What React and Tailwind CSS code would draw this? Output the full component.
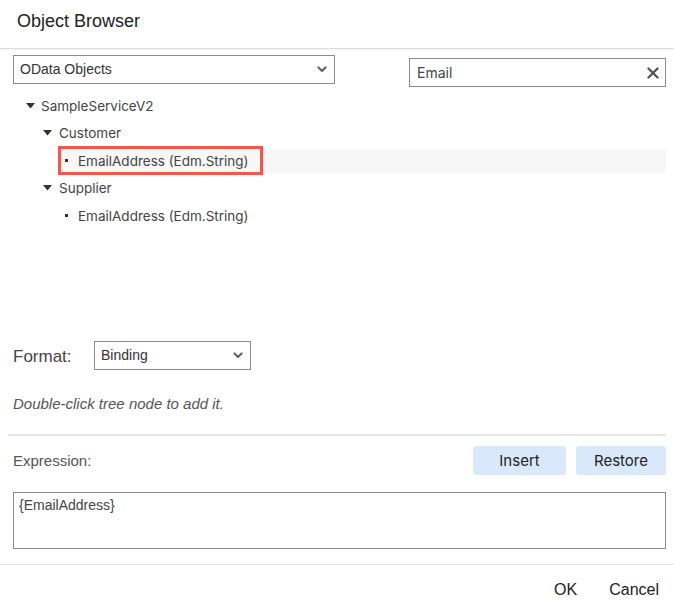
import React from 'react';

const Chevron = () => (
  <svg width="10" height="7" viewBox="0 0 10 7" className="text-[#666]">
    <path d="M1.5 1.5 L5 5 L8.5 1.5" fill="none" stroke="currentColor" strokeWidth="2.2" strokeLinecap="round" strokeLinejoin="round" />
  </svg>
);

const Caret = () => (
  <svg width="9" height="6" viewBox="0 0 9 6" className="text-[#333]">
    <path d="M0 0 L9 0 L4.5 5.5 Z" fill="currentColor" />
  </svg>
);

const TreeRow = ({ indent, children }) => (
  <div className="flex h-[27.5px] items-center" style={{ paddingLeft: indent }}>
    {children}
  </div>
);

export default function App() {
  return (
    <div className="w-[674px] h-[606px] bg-white font-['Liberation_Sans',Arial,sans-serif] text-[#333] flex flex-col overflow-hidden">
      {/* header */}
      <div className="h-[49px] flex items-center pl-[17px] pb-[6px] border-b border-[#dedede] shadow-[0_1px_2px_rgba(0,0,0,0.06)]">
        <h1 className="text-[18px] text-[#222] leading-none">Object Browser</h1>
      </div>

      <div className="pl-[13px] pr-[8px] flex flex-col">
        {/* top row */}
        <div className="flex justify-between items-start mt-[6px]">
          <div className="w-[322px] h-[29px] border-[1.5px] border-[#8a8a8a] flex items-center justify-between pl-[6px] pr-[7px]">
            <span className="text-[14px] text-[#333]">OData Objects</span>
            <Chevron />
          </div>
          <div className="w-[257px] h-[29px] mt-[3px] border-[1.5px] border-[#8a8a8a] flex items-center justify-between pl-[7px] pr-[6px]">
            <span className="text-[14px] text-[#444] font-['Inter',sans-serif]">Email</span>
            <svg width="12" height="12" viewBox="0 0 12 12" className="text-[#555]">
              <path d="M1.5 1.5 L10.5 10.5 M10.5 1.5 L1.5 10.5" stroke="currentColor" strokeWidth="2.4" strokeLinecap="round" />
            </svg>
          </div>
        </div>

        {/* tree */}
        <div className="mt-[5px] h-[237px] font-['Inter',sans-serif] text-[13.5px] text-[#444]">
          <TreeRow indent={13}>
            <Caret />
            <span className="ml-[6px]">SampleServiceV2</span>
          </TreeRow>
          <TreeRow indent={30}>
            <Caret />
            <span className="ml-[7px]">Customer</span>
          </TreeRow>
          <TreeRow indent={48}>
            <div className="relative flex-1 h-[24px] bg-[#f7f7f7] flex items-center">
              <span className="ml-[4px] w-[3px] h-[3px] bg-[#333]" />
              <span className="ml-[10px]">EmailAddress (Edm.String)</span>
              <div className="absolute -top-[3px] -left-[3px] w-[205px] h-[29px] border-[3px] border-[#f1574b]" />
            </div>
          </TreeRow>
          <TreeRow indent={30}>
            <Caret />
            <span className="ml-[7px]">Supplier</span>
          </TreeRow>
          <TreeRow indent={48}>
            <span className="ml-[4px] w-[3px] h-[3px] bg-[#333]" />
            <span className="ml-[10px]">EmailAddress (Edm.String)</span>
          </TreeRow>
        </div>

        {/* format */}
        <div className="flex items-center mt-[12px]">
          <span className="text-[17px] text-[#444] w-[81px] mt-[2px]">Format:</span>
          <div className="w-[157px] h-[29px] border-[1.5px] border-[#8a8a8a] flex items-center justify-between pl-[6px] pr-[7px]">
            <span className="text-[14px] text-[#333]">Binding</span>
            <Chevron />
          </div>
        </div>

        <p className="mt-[25px] text-[15px] italic text-[#555] leading-[18px]">Double-click tree node to add it.</p>

        <div className="mt-[21px] -ml-[5px] h-[2px] bg-[#e6e6e6]" />

        {/* expression */}
        <div className="flex items-center justify-between mt-[10px]">
          <span className="text-[15px] text-[#555] mt-[1px]">Expression:</span>
          <div className="flex gap-[10px] font-['Inter',sans-serif]">
            <button className="w-[93px] h-[29px] rounded-[3px] bg-[#d9e9fb] text-[15px] text-[#222] pt-[1px]">Insert</button>
            <button className="w-[90px] h-[29px] rounded-[3px] bg-[#d9e9fb] text-[15px] text-[#222] pt-[1px]">Restore</button>
          </div>
        </div>

        <div className="mt-[17px] h-[57px] border-[1.5px] border-[#8a8a8a] px-[5px]">
          <span className="text-[14px] leading-[18px] text-[#444]">{'{EmailAddress}'}</span>
        </div>
      </div>

      {/* footer */}
      <div className="mt-[15px] border-t border-[#e3e3e3] flex-1 flex justify-end items-start pt-[13px] pr-[15px] gap-[32px] text-[16px] text-[#222]">
        <button>OK</button>
        <button>Cancel</button>
      </div>
    </div>
  );
}
